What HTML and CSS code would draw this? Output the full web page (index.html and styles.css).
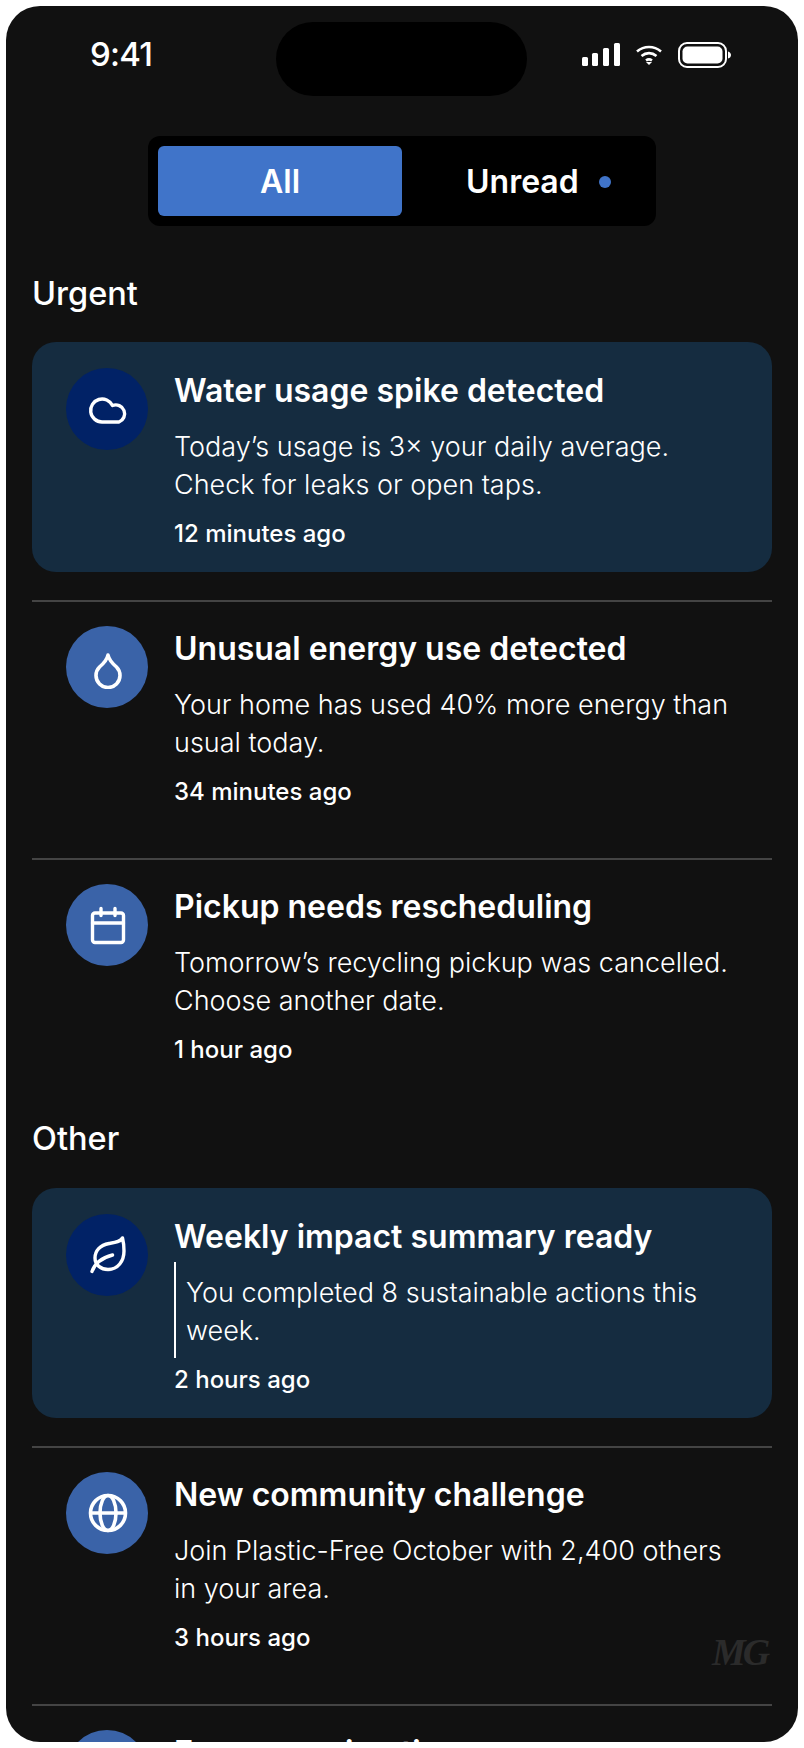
FILE: index.html
```html
<!DOCTYPE html>
<html lang="en">

<head>
    <meta charset="UTF-8">
    <meta name="viewport" content="width=device-width, initial-scale=1.0">
    <title>Notifications</title>
    <link rel="stylesheet" href="styles.css">
</head>

<body>
    <div class="phone">
        <!-- Status bar -->
        <div class="status-bar">
            <span class="time">9:41</span>
            <div class="island"></div>
            <div class="status-icons">
                <svg width="38" height="24" viewBox="0 0 38 24" fill="#fff">
                    <rect x="0" y="14" width="6" height="9" rx="1.5"/>
                    <rect x="10" y="10" width="6" height="13" rx="1.5"/>
                    <rect x="21" y="5" width="6" height="18" rx="1.5"/>
                    <rect x="32" y="0" width="6" height="23" rx="1.5"/>
                </svg>
                <svg width="28" height="22" viewBox="0 0 28 22" fill="none" stroke="#fff" stroke-width="2.6">
                    <path d="M2 7.5c7-6 17-6 24 0"/>
                    <path d="M6.5 12c4.500-3.800 10.500-3.800 15 0"/>
                    <path d="M11 16.500c1.800-1.300 4.200-1.300 6 0"/>
                    <path d="M14 21l-3-3h6z" fill="#fff" stroke="none"/>
                </svg>
                <svg width="54" height="26" viewBox="0 0 54 26" fill="none">
                    <rect x="1" y="1" width="47" height="24" rx="8" stroke="#fff" stroke-width="2"/>
                    <rect x="4.500" y="4.500" width="40" height="17" rx="5" fill="#fff"/>
                    <path d="M50 9.500c2 .5 3 2 3 3.500s-1 3-3 3.500z" fill="#fff"/>
                </svg>
            </div>
        </div>

        <!-- Tabs -->
        <div class="tabs">
            <div class="tab tab-active">All</div>
            <div class="tab tab-unread">Unread <span class="dot"></span></div>
        </div>

        <h2 class="section-title">Urgent</h2>

        <div class="item item-new">
            <div class="icon icon-dark">
                <svg width="40" height="40" viewBox="0 0 40 40" fill="none" stroke="#fff" stroke-width="3.400" stroke-linejoin="round">
                    <path d="M14 33A11.500 11.500 0 1 1 24.500 16.500 8.500 8.500 0 0 1 31 33z"/>
                </svg>
            </div>
            <div class="item-body">
                <h3>Water usage spike detected</h3>
                <p>Today’s usage is 3× your daily average.<br>Check for leaks or open taps.</p>
                <span class="ago">12 minutes ago</span>
            </div>
        </div>
        <hr class="divider">

        <div class="item">
            <div class="icon">
                <svg class="icon-low" width="40" height="40" viewBox="0 0 40 40" fill="none" stroke="#fff" stroke-width="3.600" stroke-linejoin="round">
                    <path d="M20 6C21 11 25 15 28.500 18A12 12 0 1 1 11.500 18C15 15 19 11 20 6z"/>
                </svg>
            </div>
            <div class="item-body">
                <h3>Unusual energy use detected</h3>
                <p>Your home has used 40% more energy than<br>usual today.</p>
                <span class="ago">34 minutes ago</span>
            </div>
        </div>
        <hr class="divider">

        <div class="item">
            <div class="icon">
                <svg width="40" height="40" viewBox="0 0 40 40" fill="none" stroke="#fff" stroke-width="3.400" stroke-linecap="round" stroke-linejoin="round">
                    <rect x="4.500" y="8" width="31" height="29.500" rx="2.500"/>
                    <path d="M4.500 18h31M13 3.500v7M27 3.500v7"/>
                </svg>
            </div>
            <div class="item-body">
                <h3>Pickup needs rescheduling</h3>
                <p>Tomorrow’s recycling pickup was cancelled.<br>Choose another date.</p>
                <span class="ago">1 hour ago</span>
            </div>
        </div>

        <h2 class="section-title section-other">Other</h2>

        <div class="item item-new">
            <div class="icon icon-dark">
                <svg width="40" height="40" viewBox="0 0 40 40" fill="none" stroke="#fff" stroke-width="3.400" stroke-linecap="round" stroke-linejoin="round">
                    <path d="M34.500 3C32 7 27 7.500 21 8.500 12 10 7 16 7 23 7 30 13 34.500 20 34.500 30 34.500 36 26 36 16 36 11 35.500 7 34.500 3z"/>
                    <path d="M4 36.500C7 28 13 23 24.500 20"/>
                </svg>
            </div>
            <div class="item-body">
                <h3>Weekly impact summary ready</h3>
                <p class="quoted">You completed 8 sustainable actions this<br>week.</p>
                <span class="ago">2 hours ago</span>
            </div>
        </div>
        <hr class="divider">

        <div class="item">
            <div class="icon">
                <svg width="40" height="40" viewBox="0 0 40 40" fill="none" stroke="#fff" stroke-width="3.600">
                    <circle cx="20" cy="20" r="17.500"/>
                    <ellipse cx="20" cy="20" rx="8" ry="17.500"/>
                    <path d="M2.500 20h35"/>
                </svg>
            </div>
            <div class="item-body">
                <h3>New community challenge</h3>
                <p>Join Plastic-Free October with 2,400 others<br>in your area.</p>
                <span class="ago">3 hours ago</span>
            </div>
        </div>
        <hr class="divider">

        <div class="item">
            <div class="icon"></div>
            <div class="item-body">
                <h3>Energy saving tip</h3>
            </div>
        </div>

        <span class="watermark">MG</span>
    </div>
</body>

</html>
```

FILE: styles.css
```css
body {
    font-family: Inter, "Noto Sans", sans-serif;
    margin: 0;
    padding: 6px;
    background-color: #fff;
    color: #fff;
}

h2, h3, p {
    margin: 0;
    font-weight: normal;
}

.phone {
    position: relative;
    width: 792px;
    height: 1736px;
    box-sizing: border-box;
    padding: 0 26px;
    overflow: hidden;
    background-color: #111;
    border-radius: 34px;
}

.status-bar {
    display: flex;
    align-items: center;
    height: 74px;
    margin-top: 16px;
    padding: 0 40px 0 58px;
}

.time {
    width: 186px;
    font-size: 33px;
    font-weight: 500;
    letter-spacing: -0.8px;
    margin-bottom: 10px;
}

.island {
    width: 251px;
    height: 74px;
    background-color: #000;
    border-radius: 37px;
}

.status-icons {
    display: flex;
    align-items: center;
    gap: 15px;
    margin-left: auto;
    margin-bottom: 8px;
}

.tabs {
    display: flex;
    width: 508px;
    height: 90px;
    box-sizing: border-box;
    margin: 40px auto 0;
    padding: 10px;
    background-color: #000;
    border-radius: 12px;
}

.tab {
    display: flex;
    flex: 1;
    justify-content: center;
    align-items: center;
    padding-top: 1px;
    font-size: 32px;
    font-weight: 600;
    border-radius: 6px;
}

.tab-active {
    flex: 0 0 244px;
    background-color: #4074c9;
}

.tab-unread {
    justify-content: flex-start;
    gap: 20px;
    padding-left: 64px;
}

.dot {
    width: 12px;
    height: 12px;
    background-color: #4074c9;
    border-radius: 50%;
}

.section-title {
    height: 116px;
    line-height: 135px;
    font-size: 32.5px;
    font-weight: 500;
}

.section-other {
    height: 100px;
    line-height: 102px;
}

.item {
    display: flex;
    gap: 26px;
    height: 228px;
    box-sizing: border-box;
    padding: 24px 34px 0;
}

.item-new {
    height: 230px;
    padding-top: 26px;
    background-color: #152c40;
    border-radius: 24px;
}

.icon {
    display: flex;
    flex: none;
    justify-content: center;
    align-items: center;
    width: 82px;
    height: 82px;
    background-color: #3a63a8;
    border-radius: 50%;
}

.icon svg {
    margin-left: 2px;
}

.icon-dark {
    background-color: #012266;
}

.icon-low {
    margin-top: 4px;
}

.item-body h3 {
    font-size: 32px;
    font-weight: 600;
    line-height: 44px;
    margin-top: 1px;
    margin-bottom: 15px;
}

.item-body p {
    font-size: 27px;
    font-weight: 300;
    line-height: 38px;
    margin-bottom: 15px;
}

.item-body .quoted {
    padding: 12px 0 8px 10px;
    border-left: 2px solid #fff;
    margin-top: -12px;
    margin-bottom: 7px;
}

.ago {
    display: block;
    font-size: 24px;
    font-weight: 500;
    line-height: 30px;
}

.divider {
    height: 2px;
    margin: 28px 0 0;
    border: none;
    background-color: #444;
}

.watermark {
    position: absolute;
    left: 706px;
    top: 1624px;
    font-family: "Liberation Serif", serif;
    font-style: italic;
    font-weight: bold;
    font-size: 38px;
    letter-spacing: -3px;
    color: #2b2b2b;
}
```
